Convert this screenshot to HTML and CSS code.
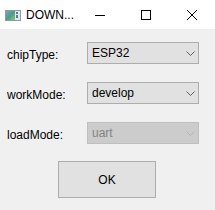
FILE: index.html
```html
<!DOCTYPE html>
<html lang="en">
<head>
    <meta charset="UTF-8">
    <title>DOWNLOAD</title>
    <link rel="stylesheet" href="styles.css">
</head>
<body>
    <div class="window">
        <div class="titlebar">
            <div class="app-icon">
                <svg width="16" height="11" viewBox="0 0 16 11">
                    <defs>
                        <linearGradient id="g" x1="0" y1="0" x2="1" y2="1">
                            <stop offset="0" stop-color="#7aa6c8"/>
                            <stop offset="0.5" stop-color="#4f9a8a"/>
                            <stop offset="1" stop-color="#8cc86a"/>
                        </linearGradient>
                    </defs>
                    <rect x="0.5" y="0.5" width="15" height="10" fill="#dfe6ec" stroke="#8c9aa6"/>
                    <rect x="1" y="1" width="9" height="9" fill="url(#g)"/>
                    <rect x="11" y="2" width="2" height="2" fill="#5a7a94"/>
                    <rect x="11" y="5" width="2" height="3" fill="#5a7a94"/>
                </svg>
            </div>
            <span class="title">DOWN...</span>
            <div class="caption-buttons">
                <span class="cap-btn">
                    <svg width="10" height="10" viewBox="0 0 10 10"><path d="M0 5.5H10" stroke="#000" stroke-width="1"/></svg>
                </span>
                <span class="cap-btn">
                    <svg width="10" height="10" viewBox="0 0 10 10"><rect x="0.5" y="0.5" width="9" height="9" fill="none" stroke="#000"/></svg>
                </span>
                <span class="cap-btn">
                    <svg width="10" height="10" viewBox="0 0 10 10"><path d="M0 0L10 10M10 0L0 10" stroke="#000" stroke-width="1"/></svg>
                </span>
            </div>
        </div>
        <div class="content">
            <div class="form-row">
                <label>chipType:</label>
                <div class="combo"><span class="value">ESP32</span>
                    <svg class="arrow" width="9" height="5" viewBox="0 0 9 5"><path d="M0.5 0.5L4.5 4.5L8.5 0.5" fill="none" stroke="#606060"/></svg>
                </div>
            </div>
            <div class="form-row">
                <label>workMode:</label>
                <div class="combo"><span class="value">develop</span>
                    <svg class="arrow" width="9" height="5" viewBox="0 0 9 5"><path d="M0.5 0.5L4.5 4.5L8.5 0.5" fill="none" stroke="#606060"/></svg>
                </div>
            </div>
            <div class="form-row">
                <label>loadMode:</label>
                <div class="combo disabled"><span class="value">uart</span>
                    <svg class="arrow" width="9" height="5" viewBox="0 0 9 5"><path d="M0.5 0.5L4.5 4.5L8.5 0.5" fill="none" stroke="#b4b4b4"/></svg>
                </div>
            </div>
            <div class="actions">
                <button class="ok">OK</button>
            </div>
        </div>
    </div>
</body>
</html>
```

FILE: styles.css
```css
body {
    margin: 0;
    font-family: "Liberation Sans", Arial, sans-serif;
    font-size: 12px;
    color: #000;
    background: #f0f0f0;
}
.window {
    width: 215px;
    height: 210px;
    display: flex;
    flex-direction: column;
}
.titlebar {
    height: 29px;
    background: #fff;
    display: flex;
    align-items: center;
}
.app-icon {
    width: 16px;
    height: 11px;
    margin-left: 5px;
    margin-top: 2px;
    display: flex;
}
.title {
    margin-left: 5px;
    font-size: 12px;
}
.caption-buttons {
    margin-left: auto;
    display: flex;
    align-items: center;
}
.cap-btn {
    width: 46px;
    height: 29px;
    display: flex;
    align-items: center;
    justify-content: center;
}
.cap-btn svg {
    display: block;
}
.content {
    flex: 1;
    padding-top: 13px;
    display: flex;
    flex-direction: column;
}
.form-row {
    display: flex;
    align-items: center;
    height: 22px;
    margin-bottom: 18px;
}
.form-row label {
    width: 80px;
    padding-left: 7px;
    padding-top: 4px;
}
.combo {
    box-sizing: border-box;
    width: 112px;
    height: 22px;
    border: 1px solid #adadad;
    background: #e1e1e1;
    display: flex;
    align-items: center;
    padding-left: 4px;
}
.combo .value {
    flex: 1;
}
.arrow {
    display: block;
    margin-right: 3px;
}
.combo.disabled {
    background: #cccccc;
    border-color: #bfbfbf;
    color: #838383;
}
.actions {
    padding-left: 58px;
    margin-top: -1px;
}
.ok {
    box-sizing: border-box;
    width: 98px;
    height: 37px;
    border: 1px solid #adadad;
    background: #e1e1e1;
    font-family: "Liberation Sans", Arial, sans-serif;
    font-size: 12px;
    color: #000;
    padding: 0;
}
```
